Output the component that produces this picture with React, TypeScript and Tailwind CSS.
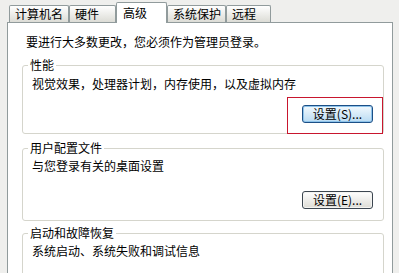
const tabs = [
  { label: "计算机名", w: "w-[60px]" },
  { label: "硬件", w: "w-[47px]" },
  { label: "高级", w: "w-[51px]", active: true },
  { label: "系统保护", w: "w-[59px]" },
  { label: "远程", w: "w-[45px]" },
];

const XpButton = ({ label, focused }: { label: string; focused?: boolean }) => (
  <button
    type="button"
    className={
      focused
        ? "h-[18px] w-[71px] rounded-[3px] border border-[#1c4f86] bg-linear-to-b from-[#f3f9fd] to-[#b9dbf3] shadow-[inset_0_0_0_1px_#8ec3ea] text-[12px] leading-[14px] text-black"
        : "h-[18px] w-[71px] rounded-[3px] border border-[#3c4650] bg-linear-to-b from-white to-[#dddcd6] shadow-[inset_0_0_0_1px_#f4f4f2] text-[12px] leading-[14px] text-black"
    }>
    {label}
  </button>
);

const App = () => {
  return (
    <div className="w-[399px] h-[273px] overflow-hidden bg-[#efefed] pl-[7px] pt-[2px] text-[12px] leading-[14px] text-black [font-family:'Noto_Sans_CJK_SC','Noto_Sans',sans-serif]">
      {/* tab strip */}
      <div className="flex h-[20px] items-end pl-[2px]">
        {tabs.map((t) =>
          t.active ? (
            <div
              key={t.label}
              className={`${t.w} relative z-10 -mb-px h-[21px] rounded-t-[2px] border border-b-0 border-[#919b9c] bg-white pl-[6px] pt-[3px]`}>
              {t.label}
            </div>
          ) : (
            <div
              key={t.label}
              className={`${t.w} h-[17px] rounded-t-[2px] border border-b-0 border-[#919b9c] bg-linear-to-b from-white to-[#dcdcd6] pl-[5px] pt-[1px]`}>
              {t.label}
            </div>
          )
        )}
      </div>

      {/* panel */}
      <div className="h-[260px] w-[386px] border border-[#919b9c] bg-white pt-[12px]">
        <p className="pl-[18px]">要进行大多数更改，您必须作为管理员登录。</p>

        <fieldset className="ml-[14px] mt-[9px] w-[362px] rounded-[3px] border border-[#d5d5cc]">
          <legend className="ml-[5px] px-[2px]">性能</legend>
          <p className="mt-[5px] pl-[9px]">视觉效果，处理器计划，内存使用，以及虚拟内存</p>
          <div className="-mb-px mt-[6px] flex justify-end">
            <div className="border border-[#c8162e] pb-[10px] pl-[14px] pr-[9px] pt-[7px]">
              <XpButton label="设置(S)..." focused />
            </div>
          </div>
        </fieldset>

        <fieldset className="ml-[14px] mt-[7px] w-[362px] rounded-[3px] border border-[#d5d5cc]">
          <legend className="ml-[5px] px-[2px]">用户配置文件</legend>
          <p className="mt-[4px] pl-[9px]">与您登录有关的桌面设置</p>
          <div className="mt-[18px] flex justify-end pb-[11px] pr-[10px]">
            <XpButton label="设置(E)..." />
          </div>
        </fieldset>

        <fieldset className="ml-[14px] mt-[5px] h-[80px] w-[362px] rounded-[3px] border border-[#d5d5cc]">
          <legend className="ml-[5px] px-[2px]">启动和故障恢复</legend>
          <p className="mt-[4px] pl-[9px]">系统启动、系统失败和调试信息</p>
        </fieldset>
      </div>
    </div>
  );
};

export default App;
